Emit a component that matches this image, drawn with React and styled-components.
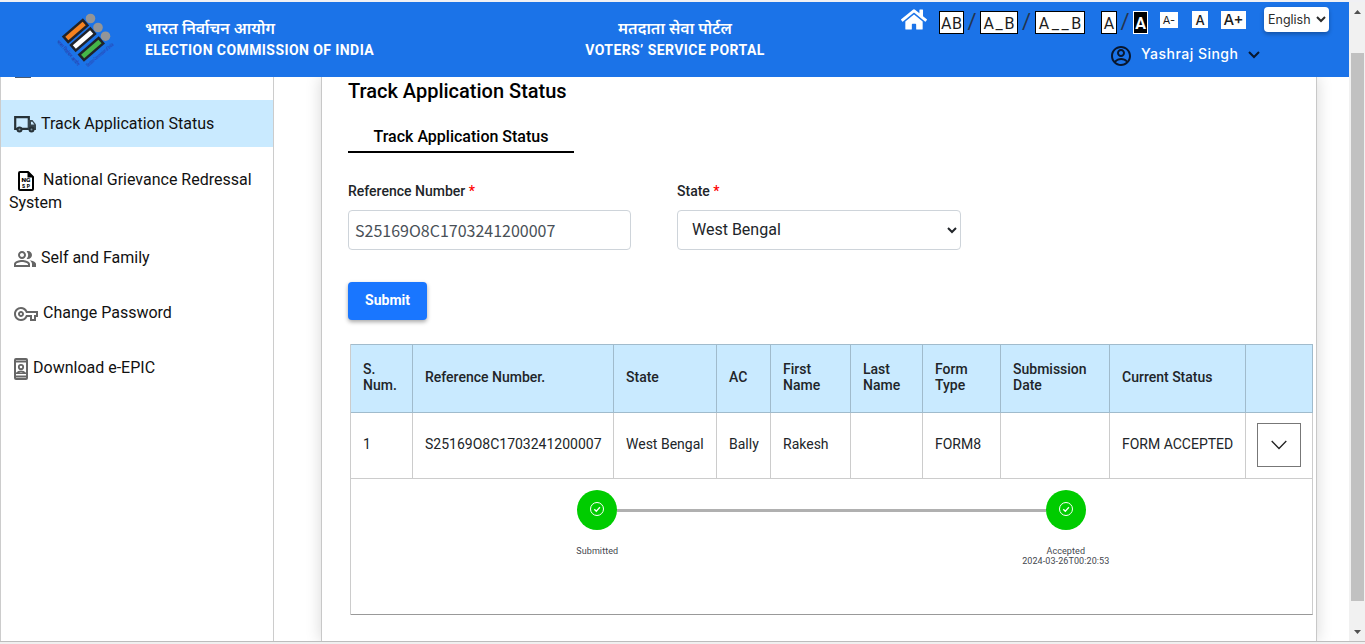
import React from "react";
import styled, { createGlobalStyle } from "styled-components";
import { FaHome } from "react-icons/fa";
import { RiAccountCircleLine } from "react-icons/ri";
import { MdOutlinePeopleAlt, MdOutlineVpnKey } from "react-icons/md";

const GlobalStyle = createGlobalStyle`
  * { box-sizing: border-box; }
  body { margin: 0; background: #fff; font-family: Roboto, "Noto Sans", sans-serif; color: #212529; overflow: hidden; }
`;

const Window = styled.div`
  width: 1365px;
  height: 644px;
  display: flex;
  border-top: 2px solid #f0f0f4;
  background: #f0f0f0;
  overflow: hidden;
`;
const Page = styled.div`
  width: 1349px;
  height: 640px;
  display: flex;
  flex-direction: column;
  background: #fff;
  border-bottom: 1px solid #bdbdbd;
`;

/* Header */
const Header = styled.header`
  height: 75px;
  flex: none;
  display: flex;
  align-items: flex-start;
  background: #1b73e8;
  color: #fff;
`;
const Emblem = styled.svg`
  flex: none;
  margin: 8px 0 0 52px;
  overflow: visible;
`;
const Titles = styled.div`
  width: ${(p) => p.$width}px;
  margin-left: ${(p) => p.$left}px;
  padding-top: 16px;
  text-align: ${(p) => p.$align || "left"};
  font-weight: 700;
  white-space: nowrap;
`;
const HindiTitle = styled.div`
  font-family: "Noto Sans Devanagari", "Noto Sans", sans-serif;
  font-size: 15.9px;
  line-height: 24px;
  height: 22px;
  font-weight: 600;
`;
const EnglishTitle = styled.div`
  font-size: 14px;
  line-height: 20px;
  letter-spacing: 0.42px;
`;
const Tools = styled.div`
  flex: 1;
  margin-left: 114px;
`;
const ToolRow = styled.div`
  display: flex;
  align-items: flex-start;
  height: 37px;
  padding: 5px 0 0 22px;
`;
const HomeIcon = styled(FaHome)`
  width: 26px;
  height: 25px;
  margin: 0 12px 0 0;
  flex: none;
`;
const ToolBox = styled.div`
  flex: none;
  width: ${(p) => p.$w}px;
  height: ${(p) => p.$h || 23}px;
  margin-top: ${(p) => p.$top ?? 4}px;
  margin-right: ${(p) => p.$gap || 0}px;
  padding-top: ${(p) => (p.$frame ? 2 : 0)}px;
  padding-left: ${(p) => p.$track || 0}px;
  display: flex;
  justify-content: center;
  align-items: center;
  background: ${(p) => (p.$dark ? "#000" : "#fff")};
  color: ${(p) => (p.$dark ? "#fff" : "#1c1c1c")};
  border: ${(p) => (p.$frame ? `1px solid ${p.$dark ? "#fff" : "#000"}` : "0")};
  font-family: ${(p) => (p.$frame ? "Roboto" : "Inter")}, sans-serif;
  font-size: ${(p) => p.$size || 16}px;
  font-weight: ${(p) => p.$weight || 400};
  letter-spacing: ${(p) => p.$track || 0}px;
  line-height: 20px;
`;
const Slash = styled.span`
  flex: none;
  width: ${(p) => p.$w || 16}px;
  margin-top: 4px;
  text-align: center;
  color: #24344f;
  font: 22px/22px Roboto, sans-serif;
`;
const Language = styled.select`
  width: 65px;
  height: 25px;
  border: 0;
  border-radius: 4px;
  padding: 0;
  background: #fff;
  color: #2b2b2b;
  font: 12.5px Inter, sans-serif;
  box-shadow: 0 2px 4px rgba(0, 0, 0, 0.3);
`;
const UserRow = styled.div`
  display: flex;
  align-items: center;
  height: 32px;
  padding-left: 230px;
`;
const UserIcon = styled(RiAccountCircleLine)`
  width: 24px;
  height: 24px;
  margin-top: 1px;
  color: #08172f;
`;
const UserName = styled.span`
  width: 107px;
  margin: -3px 0 0 8px;
  font: 500 14px/20px Inter, sans-serif;
  letter-spacing: 0.48px;
  white-space: nowrap;
`;

/* Body */
const Body = styled.div`
  flex: 1;
  display: flex;
  min-height: 0;
  overflow: hidden;
`;
const Sidebar = styled.nav`
  width: 274px;
  flex: none;
  border: solid #ccc;
  border-width: 0 1px;
`;
const Sliver = styled.div`
  width: 16px;
  height: 1px;
  margin: 0 0 22px 14px;
  background: #4a5a70;
`;
const MenuItem = styled.a`
  display: block;
  height: ${(p) => p.$h || 47}px;
  margin-bottom: ${(p) => p.$gap ?? 8}px;
  padding: 12px 8px;
  background: ${(p) => (p.$active ? "#c9eaff" : "transparent")};
  color: #111;
  font-size: 16px;
  line-height: 23px;
`;
const MenuIcon = styled.span`
  display: inline-flex;
  justify-content: center;
  align-items: flex-start;
  width: ${(p) => p.$w}px;
  height: 20px;
  margin: 0 ${(p) => p.$right || 5}px 0 ${(p) => p.$left ?? 5}px;
  vertical-align: top;
  color: #666;
  svg {
    flex: none;
    margin-top: ${(p) => p.$dy ?? 1}px;
  }
`;

const Panel = styled.main`
  width: 996px;
  margin-left: 47px;
  padding: 0 3px 0 26px;
  border: solid #c8c8c8;
  border-width: 0 1px;
  box-shadow: 0 0 15px rgba(0, 0, 0, 0.16);
`;
const Heading = styled.h1`
  margin: 0;
  padding-top: 2px;
  font: 500 20px/24px Roboto, sans-serif;
  color: #000;
`;
const Tab = styled.div`
  width: 226px;
  height: 34px;
  margin-top: 16px;
  border-bottom: 2px solid #000;
  text-align: center;
  font: 500 16px/36px Roboto, sans-serif;
  color: #000;
`;
const Fields = styled.div`
  display: flex;
  gap: 46px;
  margin-top: 28px;
`;
const Field = styled.div`
  width: ${(p) => p.$w}px;
`;
const Label = styled.label`
  display: block;
  height: 29px;
  font: 500 14px/20px Roboto, sans-serif;
  color: #212529;
  b { color: red; font-weight: 500; }
`;
const Input = styled.input`
  display: block;
  width: 100%;
  height: 40px;
  padding: 0 6px;
  border: 1px solid #ced4da;
  border-radius: 4px;
  color: #495057;
  font: 16px "Noto Sans CJK SC", sans-serif;
`;
const Select = styled.select`
  display: block;
  width: 100%;
  height: 40px;
  padding: 0 0 2px 10px;
  border: 1px solid #ced4da;
  border-radius: 4px;
  background: #fff;
  color: #212529;
  font: 16px Roboto, sans-serif;
`;
const Submit = styled.button`
  display: block;
  width: 79px;
  height: 38px;
  margin-top: 32px;
  padding: 0 0 2px;
  border: 0;
  border-radius: 4px;
  background: #1976ff;
  color: #fff;
  font: 700 14px Roboto, sans-serif;
  box-shadow: 0 2px 4px rgba(0, 0, 0, 0.35);
`;

/* Results */
const Results = styled.div`
  width: 963px;
  margin: 24px 0 0 2px;
  border-left: 1px solid rgba(0, 0, 0, 0.2);
`;
const Row = styled.div`
  display: grid;
  grid-template-columns: 62px 201px 103px 54px 80px 72px 78px 109px 136px 67px;
  height: ${(p) => p.$h}px;
  background: ${(p) => (p.$head ? "#c9eaff" : "#fff")};
  border-top: ${(p) => (p.$head ? "1px solid #a1bbcc" : "0")};
  font-weight: ${(p) => (p.$head ? 500 : 400)};
`;
const Cell = styled.div`
  display: flex;
  align-items: center;
  padding: ${(p) => (p.$button ? "0 11px 2px" : "0 0 4px 12px")};
  border-right: 1px solid rgba(0, 0, 0, 0.2);
  border-bottom: 1px solid rgba(0, 0, 0, 0.2);
  font-size: 14px;
  line-height: 16px;
  color: #212529;
  white-space: pre-line;
`;
const Toggle = styled.button`
  width: 44px;
  height: 44px;
  padding: 0;
  margin: 0;
  border: 1px solid #777;
  background: #fff;
  display: flex;
  justify-content: center;
  align-items: center;
`;
const Details = styled.div`
  height: 136px;
  padding: 11px 12px 0 11px;
  border-right: 1px solid #ccc;
  border-bottom: 1px solid #999;
`;
const Track = styled.div`
  display: flex;
  align-items: center;
  padding: 0 214px 0 215px;
`;
const Dot = styled.div`
  width: 40px;
  height: 40px;
  flex: none;
  display: flex;
  align-items: center;
  justify-content: center;
  padding-bottom: 2px;
  border-radius: 50%;
  background: #0c0;
`;
const Line = styled.div`
  flex: 1;
  height: 3px;
  background: #b0b0b0;
`;
const StepLabels = styled.div`
  display: grid;
  grid-template-columns: 1fr 1fr;
  margin: 16px 0 0 1px;
`;
const StepLabel = styled.div`
  text-align: center;
  font: 400 9px/10px Roboto, sans-serif;
  letter-spacing: 0.09px;
  color: #44474e;
  white-space: pre-line;
`;

/* Scrollbar */
const Scrollbar = styled.div`
  width: 16px;
  height: 640px;
  display: flex;
  flex-direction: column;
  align-items: center;
  background: #f1f1f1;
  border-bottom: 1px solid #bdbdbd;
`;
const Arrow = styled.svg`
  flex: none;
  width: 7px;
  height: 4px;
  margin: ${(p) => p.$m};
`;
const Thumb = styled.div`
  width: 13px;
  height: 548px;
  margin-left: 1px;
  background: #c1c1c1;
`;

const EmblemMark = () => (
  <Emblem width="66" height="64" viewBox="52 10 66 64">
    {[
      [75.5, 31, "#f5821f"],
      [83, 39.5, "#fff"],
      [91.3, 49, "#45b649"],
    ].map(([x, y, fill]) => (
      <g key={fill} transform={`translate(${x} ${y}) rotate(-41)`}>
        <rect x="-14" y="-4.800" width="28" height="9.600" fill="#20232a" />
        <rect x="-11.500" y="-2.400" width="23" height="4.800" fill={fill} />
      </g>
    ))}
    <circle cx="90.5" cy="18.5" r="4.8" fill="#939598" />
    <circle cx="98" cy="27.5" r="4.8" fill="#939598" />
    <circle cx="105.5" cy="36.2" r="4.8" fill="#939598" />
    <g fill="#2b3fae" fontFamily="Noto Sans, sans-serif" fontSize="5" fontWeight="600">
      <text transform="translate(56.500 42) rotate(49)" textLength="32" lengthAdjust="spacingAndGlyphs">भारत निर्वाचन आयोग</text>
      <text transform="translate(88 67) rotate(-40)" textLength="34" lengthAdjust="spacingAndGlyphs">Election Commission of India</text>
    </g>
  </Emblem>
);

const TruckIcon = () => (
  <svg width="22" height="17" viewBox="0 0 22 17">
    <path d="M1.2 1.2h13.6v11.6H1.2z" fill="none" stroke="#263238" strokeWidth="2.2" />
    <path d="M14 4h4.5L22 8.600V14h-8z" fill="#37474f" />
    <path d="M17 5.700h1.300l2 2.800H17z" fill="#c9eaff" />
    <circle cx="5.500" cy="13.500" r="3" fill="#263238" />
    <circle cx="17.500" cy="13.500" r="3" fill="#263238" />
    <circle cx="5.500" cy="13.500" r="1" fill="#78909c" />
    <circle cx="17.500" cy="13.500" r="1" fill="#78909c" />
  </svg>
);
const GrievanceIcon = () => (
  <svg width="16" height="20" viewBox="0 0 16 20">
    <path d="M2 1h8l5 5v12a1 1 0 0 1-1 1H2a1 1 0 0 1-1-1V2a1 1 0 0 1 1-1z" fill="#fff" stroke="#000" strokeWidth="2" strokeLinejoin="round" />
    <path d="M9.500 0L16 6.500H9.500z" fill="#000" />
    <g fill="#000" fontFamily="Roboto, sans-serif" fontWeight="900" fontSize="5" textAnchor="middle">
      <text x="8" y="11.300" textLength="9" lengthAdjust="spacingAndGlyphs">NG</text>
      <text x="8" y="17.300" textLength="8">SP</text>
    </g>
  </svg>
);
const EpicIcon = () => (
  <svg width="14" height="22" viewBox="0 0 14 22" fill="none" stroke="#666">
    <rect x="1" y="1" width="12" height="20" rx="1" strokeWidth="2" />
    <path d="M1 3.500h12M1 18.500h12" strokeWidth="2" />
    <circle cx="7" cy="9" r="2.200" strokeWidth="1.800" />
    <path d="M2.500 15.200c1.500-1.600 3-2 4.500-2s3 .4 4.500 2z" strokeWidth="1.500" />
  </svg>
);
const CheckIcon = () => (
  <svg width="14" height="14" viewBox="0 0 14 14" fill="none" stroke="#fff" strokeWidth="1">
    <circle cx="7" cy="7" r="6.500" />
    <path d="M4.300 7.300l2 2 3.600-4.100" strokeWidth="1.300" />
  </svg>
);

const columns = ["S.\nNum.", "Reference Number.", "State", "AC", "First\nName", "Last\nName", "Form\nType", "Submission\nDate", "Current Status", ""];
const record = ["1", "S25169O8C1703241200007", "West Bengal", "Bally", "Rakesh", "", "FORM8", "", "FORM ACCEPTED"];

export default function App() {
  return (
    <Window>
      <GlobalStyle />
      <Page>
        <Header>
          <EmblemMark />
          <Titles $width={240} $left={27}>
            <HindiTitle>भारत निर्वाचन आयोग</HindiTitle>
            <EnglishTitle>ELECTION COMMISSION OF INDIA</EnglishTitle>
          </Titles>
          <Titles $width={180} $left={200} $align="center">
            <HindiTitle>मतदाता सेवा पोर्टल</HindiTitle>
            <EnglishTitle>VOTERS’ SERVICE PORTAL</EnglishTitle>
          </Titles>
          <Tools>
            <ToolRow>
              <HomeIcon />
              <ToolBox $w={25} $frame $track={0.5}>AB</ToolBox>
              <Slash>/</Slash>
              <ToolBox $w={38} $frame $track={1.7}>A_B</ToolBox>
              <Slash $w={17}>/</Slash>
              <ToolBox $w={50} $frame $track={2.6} $gap={16}>A__B</ToolBox>
              <ToolBox $w={16} $frame>A</ToolBox>
              <Slash>/</Slash>
              <ToolBox $w={15} $frame $dark $weight={700} $gap={12}>A</ToolBox>
              <ToolBox $w={18} $h={16} $top={5} $size={11} $gap={14}>A-</ToolBox>
              <ToolBox $w={16} $h={17} $size={13} $weight={500} $gap={13}>A</ToolBox>
              <ToolBox $w={25} $h={18} $size={15} $weight={500} $gap={18}>A+</ToolBox>
              <Language defaultValue="English"><option>English</option></Language>
            </ToolRow>
            <UserRow>
              <UserIcon />
              <UserName>Yashraj Singh</UserName>
              <svg width="12" height="8" viewBox="0 0 12 8" fill="none" stroke="#08172f" strokeWidth="2">
                <path d="M1 1l5 5 5-5" />
              </svg>
            </UserRow>
          </Tools>
        </Header>
        <Body>
          <Sidebar>
            <Sliver />
            <MenuItem $active $gap={9}>
              <MenuIcon $w={22} $dy={4}><TruckIcon /></MenuIcon>Track Application Status
            </MenuItem>
            <MenuItem $h={71} $gap={7}>
              <MenuIcon $w={16} $left={9} $right={9} $dy={3}><GrievanceIcon /></MenuIcon>National Grievance Redressal System
            </MenuItem>
            <MenuItem>
              <MenuIcon $w={22}><MdOutlinePeopleAlt size={24} /></MenuIcon>Self and Family
            </MenuItem>
            <MenuItem>
              <MenuIcon $w={24}><MdOutlineVpnKey size={24} /></MenuIcon>Change Password
            </MenuItem>
            <MenuItem>
              <MenuIcon $w={14} $dy={2}><EpicIcon /></MenuIcon>Download e-EPIC
            </MenuItem>
          </Sidebar>
          <Panel>
            <Heading>Track Application Status</Heading>
            <Tab>Track Application Status</Tab>
            <Fields>
              <Field $w={283}>
                <Label>Reference Number <b>*</b></Label>
                <Input defaultValue="S25169O8C1703241200007" />
              </Field>
              <Field $w={284}>
                <Label>State <b>*</b></Label>
                <Select defaultValue="West Bengal"><option>West Bengal</option></Select>
              </Field>
            </Fields>
            <Submit>Submit</Submit>
            <Results>
              <Row $head $h={69}>
                {columns.map((c, i) => <Cell key={i}>{c}</Cell>)}
              </Row>
              <Row $h={66}>
                {record.map((c, i) => <Cell key={i}>{c}</Cell>)}
                <Cell $button>
                  <Toggle>
                    <svg width="16" height="10" viewBox="0 0 16 10" fill="none" stroke="#222" strokeWidth="1.300">
                      <path d="M.7 1L8 8.500 15.300 1" />
                    </svg>
                  </Toggle>
                </Cell>
              </Row>
              <Details>
                <Track><Dot><CheckIcon /></Dot><Line /><Dot><CheckIcon /></Dot></Track>
                <StepLabels>
                  <StepLabel>Submitted</StepLabel>
                  <StepLabel>{"Accepted\n2024-03-26T00:20:53"}</StepLabel>
                </StepLabels>
              </Details>
            </Results>
          </Panel>
        </Body>
      </Page>
      <Scrollbar>
        <Arrow viewBox="0 0 9 5" $m="8px 0 39px"><path d="M0 5L4.500 0 9 5z" fill="#505050" /></Arrow>
        <Thumb />
        <Arrow viewBox="0 0 9 5" $m="29px 0 0"><path d="M0 0l4.500 5L9 0z" fill="#505050" /></Arrow>
      </Scrollbar>
    </Window>
  );
}
